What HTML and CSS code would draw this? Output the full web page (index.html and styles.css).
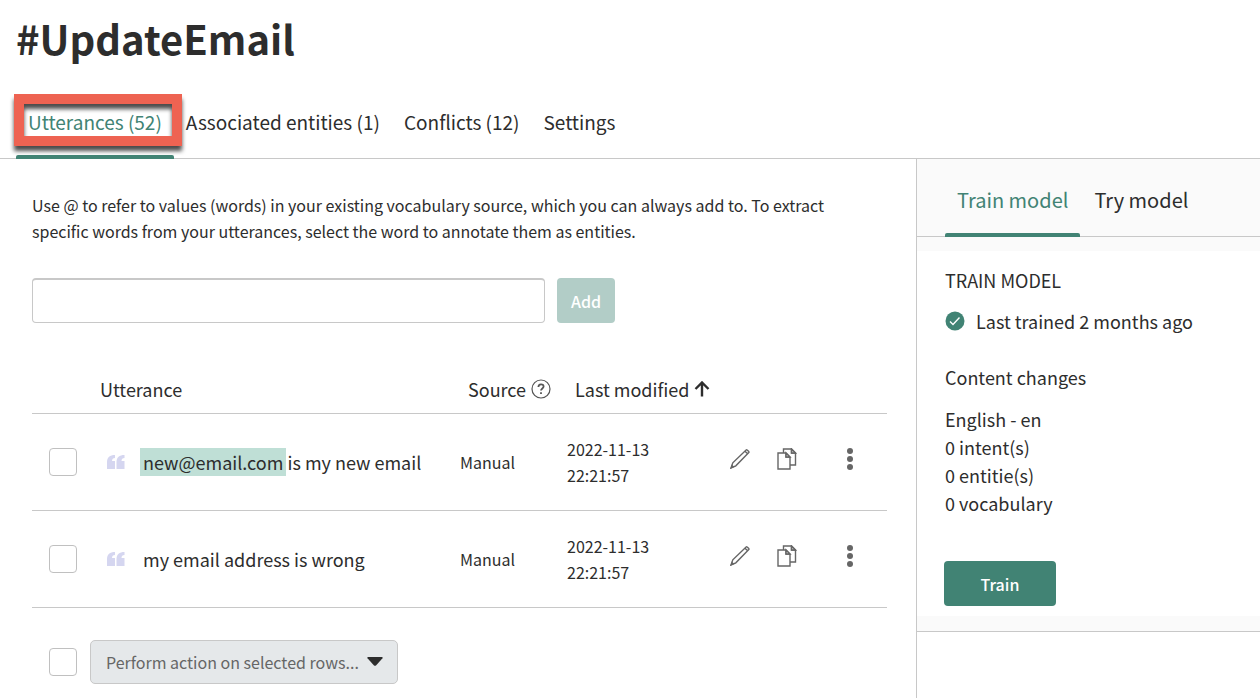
FILE: index.html
```html
<!DOCTYPE html>
<html lang="en">
<head>
  <meta charset="UTF-8">
  <meta name="viewport" content="width=device-width, initial-scale=1.0">
  <title>#UpdateEmail</title>
  <link rel="stylesheet" href="styles.css">
</head>
<body>
<svg class="sprite" aria-hidden="true">
  <symbol id="icon-quote" viewBox="0 0 18 14">
    <path d="M8 0v3C6 3 5 4 5 6h3v8H0V7C0 2.600 2.800 0 8 0zM17.500 0v3c-2 0-3 1-3 3h3v8h-8V7c0-4.400 2.800-7 8-7z"/>
  </symbol>
  <symbol id="icon-edit" viewBox="0 0 20 20">
    <path d="M1 19l1.800-5.200L16.100 1q.5-.4 1 0l1.700 1.600q.4.500 0 1L5.800 16.800zM15 2.200l2.600 2.500"/>
    <path class="tip" d="M.3 19.700l1.500-4.200 2.600 2.500z"/>
  </symbol>
  <symbol id="icon-copy" viewBox="0 0 20 22">
    <path d="M6.500 5V1h8L18.500 5v12H13M1 5h8l4 4v12H1zM9 5v4h4M14.500 1v4h4"/>
    <path class="fold" d="M9 5l4 4H9zM14.500 1l4 4h-4z"/>
  </symbol>
  <symbol id="icon-more" viewBox="0 0 6 22">
    <circle cx="3" cy="3" r="3"/>
    <circle cx="3" cy="11" r="3"/>
    <circle cx="3" cy="19" r="3"/>
  </symbol>
</svg>

<header class="page-header">
  <h1>#UpdateEmail</h1>
  <nav class="tabs">
    <a href="#utterances" class="tab active">Utterances (52)<span class="callout"></span></a>
    <a href="#entities" class="tab">Associated entities (1)</a>
    <a href="#conflicts" class="tab">Conflicts (12)</a>
    <a href="#settings" class="tab">Settings</a>
  </nav>
</header>

<div class="layout">
  <main class="content">
    <p class="intro">Use @ to refer to values (words) in your existing vocabulary source, which you can always add to. To extract specific words from your utterances, select the word to annotate them as entities.</p>

    <form class="add-form">
      <input type="text" class="add-input" aria-label="New utterance">
      <button type="button" class="btn btn-add" disabled>Add</button>
    </form>

    <table class="utterances">
      <colgroup>
        <col class="col-check">
        <col>
        <col class="col-source">
        <col class="col-date">
        <col class="col-actions">
      </colgroup>
      <thead>
      <tr>
        <th></th>
        <th>Utterance</th>
        <th>
          <span class="th-label">Source
            <svg class="icon-help" viewBox="0 0 20 20" aria-hidden="true">
              <circle cx="10" cy="10" r="9"/>
              <path class="mark" d="M7.400 8.100c0-3.700 5.200-3.600 5.200-.6 0 1.900-2.600 2-2.600 4.100M10 13.300v1.700"/>
            </svg>
          </span>
        </th>
        <th>
          <span class="th-label">Last modified
            <svg class="icon-sort" viewBox="0 0 16 16" aria-hidden="true">
              <path d="M8 15.500V2M1.500 8L8 1.500 14.500 8"/>
            </svg>
          </span>
        </th>
        <th></th>
      </tr>
      </thead>
      <tbody>
      <tr>
        <td><input type="checkbox" class="check" aria-label="Select new@email.com is my new email"></td>
        <td>
          <div class="utterance">
            <svg class="icon-quote" aria-hidden="true"><use href="#icon-quote"/></svg>
            <span><mark>new@email.com</mark> is my new email</span>
          </div>
        </td>
        <td>Manual</td>
        <td>2022-11-13<br>22:21:57</td>
        <td>
          <div class="row-actions">
            <button type="button" aria-label="Edit"><svg class="icon-edit"><use href="#icon-edit"/></svg></button>
            <button type="button" aria-label="Copy"><svg class="icon-copy"><use href="#icon-copy"/></svg></button>
            <button type="button" class="more" aria-label="More"><svg class="icon-more"><use href="#icon-more"/></svg></button>
          </div>
        </td>
      </tr>
      <tr>
        <td><input type="checkbox" class="check" aria-label="Select my email address is wrong"></td>
        <td>
          <div class="utterance">
            <svg class="icon-quote" aria-hidden="true"><use href="#icon-quote"/></svg>
            <span class="text">my email address is wrong</span>
          </div>
        </td>
        <td>Manual</td>
        <td>2022-11-13<br>22:21:57</td>
        <td>
          <div class="row-actions">
            <button type="button" aria-label="Edit"><svg class="icon-edit"><use href="#icon-edit"/></svg></button>
            <button type="button" aria-label="Copy"><svg class="icon-copy"><use href="#icon-copy"/></svg></button>
            <button type="button" class="more" aria-label="More"><svg class="icon-more"><use href="#icon-more"/></svg></button>
          </div>
        </td>
      </tr>
      </tbody>
    </table>

    <div class="bulk">
      <input type="checkbox" class="check" aria-label="Select all rows">
      <div class="select">
        <select aria-label="Bulk action">
          <option>Perform action on selected rows...</option>
        </select>
        <svg class="icon-caret" viewBox="0 0 16 9" aria-hidden="true"><path d="M1 0h14q1 .3.500 1.200L9 8.400q-1 .9-2 0L.5 1.200Q0 .3 1 0z"/></svg>
      </div>
    </div>
  </main>

  <aside class="sidebar">
    <div class="panel">
      <nav class="tabs side-tabs">
        <a href="#train" class="tab active">Train model</a>
        <a href="#try" class="tab">Try model</a>
      </nav>
      <div class="panel-body">
        <h2>TRAIN MODEL</h2>
        <p class="status">
          <svg class="icon-ok" viewBox="0 0 20 20" aria-hidden="true">
            <circle cx="10" cy="10" r="9.500"/>
            <path d="M5 10.500l3 3 6.500-7"/>
          </svg>
          Last trained 2 months ago
        </p>
        <h3>Content changes</h3>
        <ul class="changes">
          <li>English - en</li>
          <li>0 intent(s)</li>
          <li>0 entitie(s)</li>
          <li>0 vocabulary</li>
        </ul>
        <button type="button" class="btn btn-train">Train</button>
      </div>
    </div>
  </aside>
</div>
</body>
</html>
```
FILE: styles.css
```css
* {
  box-sizing: border-box;
}
body {
  margin: 0;
  min-height: 100vh;
  display: flex;
  flex-direction: column;
  font-family: "Noto Sans CJK SC", "Noto Sans", sans-serif;
  font-size: 16px;
  line-height: 26px;
  color: #2d2d2d;
  background-color: #fff;
}
h1, h2, h3, p, ul {
  margin: 0;
  padding: 0;
}
input, select, button {
  font: inherit;
  color: inherit;
}
.sprite {
  display: none;
}

/* header */
.page-header {
  border-bottom: 1px solid #c8c8c8;
}
h1 {
  padding: 14px 16px 0;
  font-size: 40px;
  line-height: 48px;
}
.tabs {
  display: flex;
  font-size: 19px;
}
.page-header .tabs {
  padding: 25px 16px 0;
  margin-bottom: -1px;
}
.tab {
  position: relative;
  padding: 20px 12px 18px;
  line-height: 30px;
  border-bottom: 4px solid transparent;
  color: #2d2d2d;
  text-decoration: none;
}
.tab.active {
  color: #418374;
}
.tab.active::after {
  content: "";
  position: absolute;
  left: 0;
  right: 0;
  bottom: -4px;
  height: 4px;
  border-radius: 2px 2px 0 0;
  background-color: #418374;
}
.callout {
  position: absolute;
  top: 7px;
  left: -2px;
  right: -8px;
  height: 52px;
  border: 10px solid #ee6352;
  filter: drop-shadow(0 5px 2px rgba(0, 0, 0, 0.7));
}

/* main column */
.layout {
  flex: 1;
  display: flex;
}
.content {
  flex: 1;
  padding: 33px 29px 12px 32px;
}
.intro {
  padding-right: 28px;
}
.add-form {
  display: flex;
  gap: 12px;
  margin-top: 34px;
}
.add-input {
  width: 60%;
  height: 45px;
  padding: 0 12px;
  border: 1px solid #c8c8c8;
  border-top-width: 2px;
  border-radius: 4px;
  background-color: #fff;
}
.btn {
  height: 45px;
  padding: 0;
  border: none;
  border-radius: 4px;
  color: #fff;
  font-size: 16px;
  font-weight: 500;
  cursor: pointer;
}
.btn-add {
  width: 58px;
  background-color: #b2cdc7;
}

/* table */
.utterances {
  width: 100%;
  margin-top: 43px;
  border-collapse: collapse;
  table-layout: fixed;
}
.col-check {
  width: 52px;
}
.col-source {
  width: 107px;
}
.col-date {
  width: 163px;
}
.col-actions {
  width: 165px;
}
th, td {
  padding: 0 0 0 8px;
  border-bottom: 1px solid #c8c8c8;
  text-align: left;
}
th {
  height: 47px;
  padding-left: 16px;
  font-size: 18px;
  font-weight: 400;
}
td {
  height: 97px;
}
.th-label {
  display: flex;
  align-items: center;
  gap: 5px;
  white-space: nowrap;
}
.icon-help {
  width: 20px;
  height: 20px;
  fill: none;
  stroke: #555;
  stroke-width: 1.2;
}
.icon-help .mark {
  stroke-width: 1.8;
}
.icon-sort {
  width: 16px;
  height: 16px;
  fill: none;
  stroke: #2d2d2d;
  stroke-width: 2.4;
}
.check {
  appearance: none;
  display: block;
  width: 28px;
  height: 28px;
  margin: 0;
  border: 1px solid #c0c0c0;
  border-radius: 4px;
  background-color: #fff;
}
td .check {
  margin-left: 9px;
}
.check:checked {
  background-color: #418374;
}
.utterance {
  display: flex;
  align-items: center;
  gap: 15px;
  padding-left: 15px;
  font-size: 18px;
  line-height: 28px;
}
.utterance .text {
  padding-left: 3px;
}
.icon-quote {
  width: 18px;
  height: 14px;
  fill: #d5d6f0;
}
mark {
  display: inline-block;
  padding: 0 3px;
  margin-right: -3px;
  background-color: #bfdfd6;
  color: inherit;
}
.row-actions {
  display: flex;
  align-items: center;
  gap: 27px;
  padding-bottom: 6px;
}
.row-actions button {
  display: flex;
  padding: 0;
  border: none;
  background: none;
  cursor: pointer;
}
.row-actions .more {
  margin-left: 23px;
}
.icon-edit {
  width: 20px;
  height: 20px;
}
.icon-copy {
  width: 20px;
  height: 22px;
}
.icon-edit, .icon-copy {
  fill: none;
  stroke: #666;
  stroke-width: 1.4;
}
.fold {
  fill: #ccc;
}
.tip {
  fill: #666;
  stroke: none;
}
.icon-more {
  width: 6px;
  height: 22px;
  fill: #666;
}

/* bulk actions */
.bulk {
  display: flex;
  align-items: center;
  gap: 13px;
  padding: 32px 0 0 17px;
}
.select {
  display: grid;
  align-items: center;
}
.select select, .icon-caret {
  grid-area: 1 / 1;
}
.select select {
  appearance: none;
  width: 308px;
  height: 44px;
  padding: 0 34px 0 15px;
  border: 1px solid #c8c8c8;
  border-radius: 5px;
  background-color: #e5e8ea;
  color: #666;
}
.icon-caret {
  justify-self: end;
  width: 16px;
  height: 9px;
  margin-right: 15px;
  fill: #2d2d2d;
  pointer-events: none;
}

/* train panel */
.sidebar {
  width: 344px;
  border-left: 1px solid #c8c8c8;
  font-size: 18px;
}
.panel {
  padding-bottom: 15px;
  border-bottom: 1px solid #c8c8c8;
  background-color: #fafafa;
}
.side-tabs {
  gap: 2px;
  padding: 6px 28px 0;
  border-bottom: 1px solid #c8c8c8;
  font-size: 20px;
}
.side-tabs .tab {
  margin-bottom: -1px;
}
.panel-body {
  margin-top: 14px;
  padding: 15px 28px 10px;
  background-color: #fff;
}
h2, h3 {
  font-size: 18px;
  font-weight: 400;
  line-height: 28px;
}
.status {
  display: flex;
  align-items: center;
  gap: 11px;
  margin: 13px 0 28px;
  line-height: 28px;
}
.icon-ok {
  width: 20px;
  height: 20px;
  fill: #418374;
}
.icon-ok path {
  fill: none;
  stroke: #fff;
  stroke-width: 1.4;
}
.changes {
  margin-top: 14px;
  list-style: none;
  line-height: 28px;
}
.btn-train {
  display: block;
  width: 112px;
  margin: 44px 0 0 -1px;
  background-color: #418374;
}
```
